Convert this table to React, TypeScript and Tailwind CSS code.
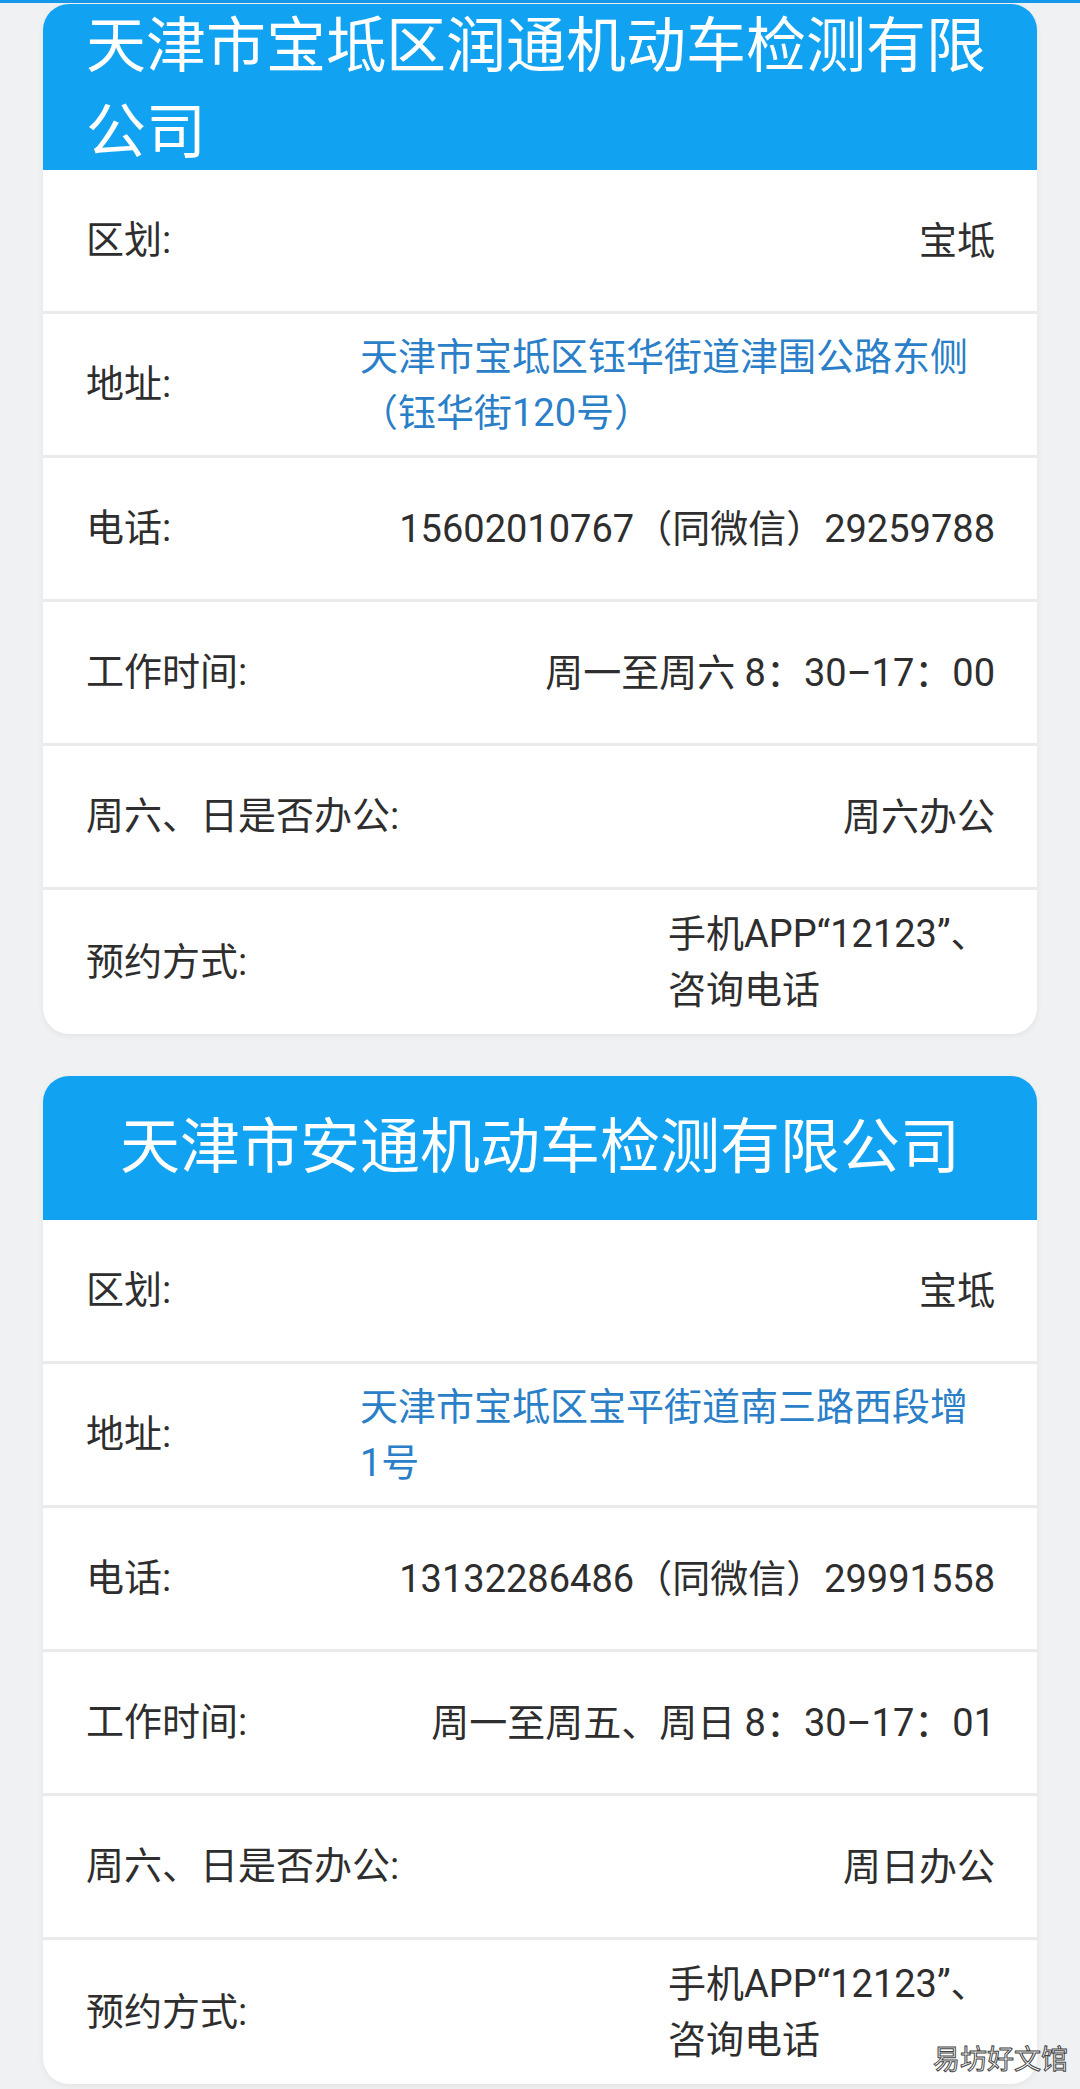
const font = "font-['Roboto','Noto_Sans_CJK_SC',sans-serif]";

type Row = { label: string; value: string[]; blue?: boolean; width?: string };

const cards: { title: string; center?: boolean; rows: Row[] }[] = [
  {
    title: "天津市宝坻区润通机动车检测有限公司",
    rows: [
      { label: "区划:", value: ["宝坻"] },
      {
        label: "地址:",
        value: ["天津市宝坻区钰华街道津围公路东侧", "（钰华街120号）"],
        blue: true,
        width: "w-[635px]",
      },
      { label: "电话:", value: ["15602010767（同微信）29259788"] },
      { label: "工作时间:", value: ["周一至周六 8：30–17：00"] },
      { label: "周六、日是否办公:", value: ["周六办公"] },
      { label: "预约方式:", value: ["手机APP“12123”、", "咨询电话"], width: "w-[327px]" },
    ],
  },
  {
    title: "天津市安通机动车检测有限公司",
    center: true,
    rows: [
      { label: "区划:", value: ["宝坻"] },
      {
        label: "地址:",
        value: ["天津市宝坻区宝平街道南三路西段增", "1号"],
        blue: true,
        width: "w-[635px]",
      },
      { label: "电话:", value: ["13132286486（同微信）29991558"] },
      { label: "工作时间:", value: ["周一至周五、周日 8：30–17：01"] },
      { label: "周六、日是否办公:", value: ["周日办公"] },
      { label: "预约方式:", value: ["手机APP“12123”、", "咨询电话"], width: "w-[327px]" },
    ],
  },
];

function InfoRow({ row, last }: { row: Row; last: boolean }) {
  return (
    <div
      className={
        "flex h-[144px] items-center justify-between pl-[43px] pr-[42px] " +
        (last ? "" : "border-b-[3px] border-[#e9eaec]")
      }
    >
      <div className="text-[38px] text-[#2e2e2e]">{row.label}</div>
      <div
        className={
          "text-left text-[38px] leading-[56px] " +
          (row.blue ? "text-[#2a7fc8] " : "text-[#2e2e2e] ") +
          (row.width ?? "")
        }
      >
        {row.value.map((line) => (
          <div key={line} className="whitespace-nowrap">
            {line}
          </div>
        ))}
      </div>
    </div>
  );
}

export default function App() {
  return (
    <div className={"relative h-[2089px] overflow-hidden bg-[#f0f1f3] " + font}>
      <div className="h-[3px] bg-[#1597ea]" />
      <div className="flex flex-col gap-[42px] px-[43px] pt-[1px]">
        {cards.map((card, i) => (
          <div key={i} className="overflow-hidden rounded-[26px] bg-white shadow-[0_2px_6px_rgba(0,0,0,0.06)]">
            {card.center ? (
              <div className="flex h-[144px] items-center justify-center bg-[#11a3f1] text-[60px] text-white">
                {card.title}
              </div>
            ) : (
              <div className="h-[166px] bg-[#11a3f1] pl-[43px] pr-[30px] text-[60px] leading-[86px] text-white">
                {card.title}
              </div>
            )}
            {card.rows.map((row, j) => (
              <InfoRow key={j} row={row} last={j === card.rows.length - 1} />
            ))}
          </div>
        ))}
      </div>
      <div className="absolute left-[933px] top-[2040px] text-[27px] text-white [-webkit-text-stroke:1px_#444]">
        易坊好文馆
      </div>
    </div>
  );
}
